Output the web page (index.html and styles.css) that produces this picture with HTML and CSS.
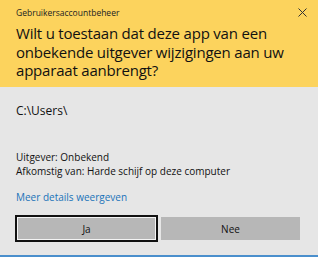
FILE: index.html
```html
<!DOCTYPE html>
<html lang="nl">
<head>
  <meta charset="UTF-8" />
  <title>Gebruikersaccountbeheer</title>
  <link rel="stylesheet" href="styles.css">
</head>
<body>
  <div class="dialog">
    <div class="header">
      <div class="header-top">
        <span class="caption">Gebruikersaccountbeheer</span>
        <svg class="close" width="9" height="9" viewBox="0 0 9 9">
          <path d="M0.5 0.5 L8.5 8.5 M8.5 0.5 L0.5 8.5" stroke="#333" stroke-width="1" fill="none" />
        </svg>
      </div>
      <h1>Wilt u toestaan dat deze app van een<br>onbekende uitgever wijzigingen aan uw<br>apparaat aanbrengt?</h1>
    </div>

    <div class="content">
      <div class="path">C:\Users\</div>

      <div class="details">
        <div>Uitgever: Onbekend</div>
        <div>Afkomstig van: Harde schijf op deze computer</div>
      </div>

      <a class="more" href="#">Meer details weergeven</a>

      <div class="buttons">
        <button class="btn btn-focus">Ja</button>
        <button class="btn">Nee</button>
      </div>
    </div>
  </div>
</body>
</html>
```

FILE: styles.css
```css
html, body {
  margin: 0;
  padding: 0;
}
body {
  font-family: "Open Sans", "Noto Sans", sans-serif;
  background: #e6e6e6;
  color: #000;
}
.dialog {
  width: 318px;
  height: 257px;
  box-sizing: border-box;
  display: flex;
  flex-direction: column;
  border-bottom: 2px solid #4a8fcc;
}
.header {
  background: #fcd35d;
  height: 87px;
  padding: 0 11px 0 16px;
  box-sizing: border-box;
}
.header-top {
  display: flex;
  justify-content: space-between;
  align-items: center;
  padding-top: 6px;
  height: 12px;
}
.caption {
  font-size: 8.5px;
  color: #222;
}
h1 {
  margin: 6px 0 0;
  font-size: 15px;
  font-weight: normal;
  line-height: 18.5px;
  color: #111;
  letter-spacing: -0.2px;
}
.content {
  flex: 1;
  padding: 0 16px;
}
.path {
  margin-top: 16px;
  font-size: 12px;
  line-height: 16px;
  color: #111;
}
.details {
  margin-top: 32px;
  font-size: 10px;
  line-height: 13.5px;
  color: #111;
}
.more {
  display: block;
  margin-top: 13px;
  font-size: 10px;
  line-height: 13px;
  color: #1a73b9;
  text-decoration: none;
}
.buttons {
  display: flex;
  gap: 1px;
  margin: 11px 0 0 -1px;
  width: 287px;
}
.btn {
  flex: 1;
  height: 27px;
  background: #b7b7b7;
  border: 2px solid #e6e6e6;
  font-family: inherit;
  font-size: 10px;
  color: #111;
  padding: 0;
  appearance: none;
  -webkit-appearance: none;
}
.btn-focus {
  border-color: #111;
  box-shadow: inset 0 0 0 1px #f4f4f4;
}
```
